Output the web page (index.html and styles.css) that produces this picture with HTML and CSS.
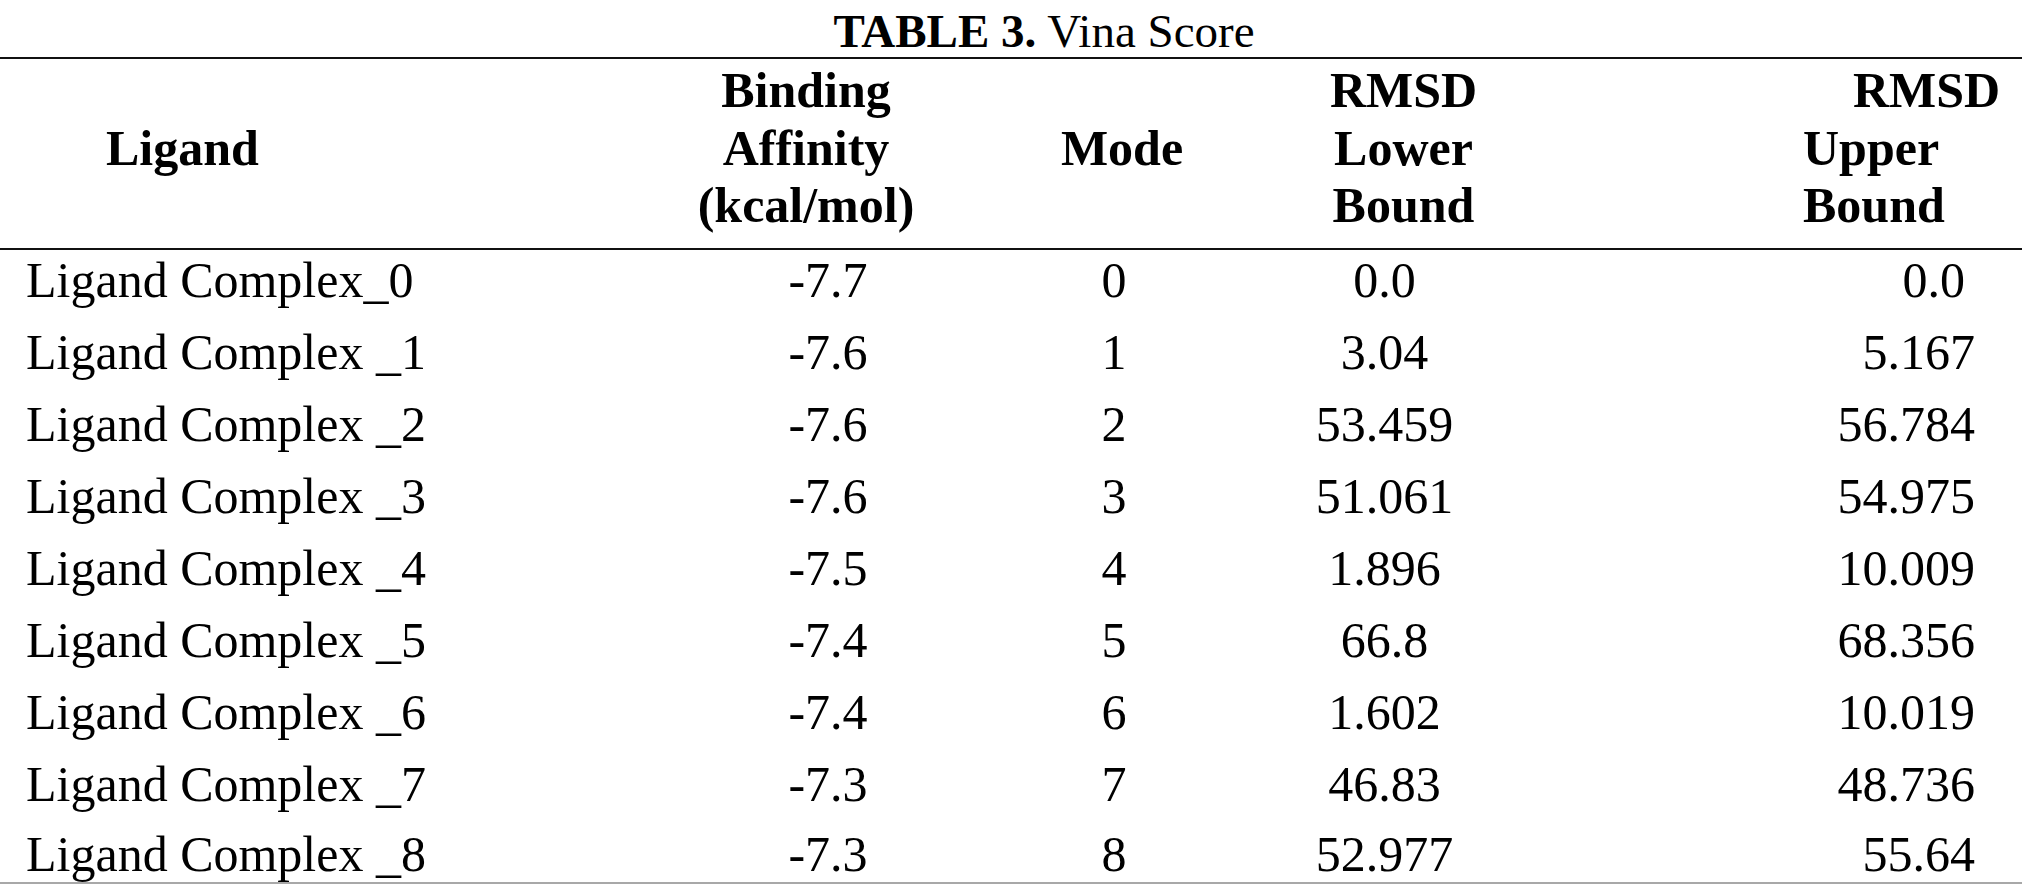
FILE: index.html
```html
<!DOCTYPE html>
<html lang="en">
<head>
<meta charset="utf-8">
<title>TABLE 3. Vina Score</title>
<link rel="stylesheet" href="styles.css">
</head>
<body>
<div class="page">
  <div class="caption"><b>TABLE 3.</b> Vina Score</div>
  <div class="table">
    <div class="head">
      <div class="hc c1"><span class="l">Ligand</span></div>
      <div class="hc c2"><span class="l">Binding</span><span class="l">Affinity</span><span class="l">(kcal/mol)</span></div>
      <div class="hc c3"><span class="l">Mode</span></div>
      <div class="hc c4"><span class="l">RMSD</span><span class="l">Lower</span><span class="l">Bound</span></div>
      <div class="hc c5"><span class="l ind">RMSD</span><span class="l">Upper</span><span class="l">Bound</span></div>
    </div>
    <div class="body">
      <div class="row"><div class="c1">Ligand Complex_0</div><div class="c2">-7.7</div><div class="c3">0</div><div class="c4">0.0</div><div class="c5 inset">0.0</div></div>
      <div class="row"><div class="c1">Ligand Complex _1</div><div class="c2">-7.6</div><div class="c3">1</div><div class="c4">3.04</div><div class="c5">5.167</div></div>
      <div class="row"><div class="c1">Ligand Complex _2</div><div class="c2">-7.6</div><div class="c3">2</div><div class="c4">53.459</div><div class="c5">56.784</div></div>
      <div class="row"><div class="c1">Ligand Complex _3</div><div class="c2">-7.6</div><div class="c3">3</div><div class="c4">51.061</div><div class="c5">54.975</div></div>
      <div class="row"><div class="c1">Ligand Complex _4</div><div class="c2">-7.5</div><div class="c3">4</div><div class="c4">1.896</div><div class="c5">10.009</div></div>
      <div class="row"><div class="c1">Ligand Complex _5</div><div class="c2">-7.4</div><div class="c3">5</div><div class="c4">66.8</div><div class="c5">68.356</div></div>
      <div class="row"><div class="c1">Ligand Complex _6</div><div class="c2">-7.4</div><div class="c3">6</div><div class="c4">1.602</div><div class="c5">10.019</div></div>
      <div class="row"><div class="c1">Ligand Complex _7</div><div class="c2">-7.3</div><div class="c3">7</div><div class="c4">46.83</div><div class="c5">48.736</div></div>
      <div class="row last"><div class="c1">Ligand Complex _8</div><div class="c2">-7.3</div><div class="c3">8</div><div class="c4">52.977</div><div class="c5">55.64</div></div>
    </div>
  </div>
</div>
</body>
</html>
```
FILE: styles.css
```css
* { box-sizing: border-box; }
html, body { margin: 0; padding: 0; background: #fff; }
body {
  font-family: "Liberation Serif", "Times New Roman", serif;
  color: #000;
  width: 2022px;
  height: 884px;
  overflow: hidden;
}
.page { display: flex; flex-direction: column; }
.caption {
  font-size: 47px;
  line-height: 52px;
  padding-top: 5px;
  padding-left: 66px;
  text-align: center;
}
.caption b { font-weight: bold; }
.table { display: flex; flex-direction: column; }
.head, .row {
  display: grid;
  grid-template-columns: 612px 388px 244px 316px 462px;
}
.head {
  border-top: 2px solid #111;
  border-bottom: 2px solid #111;
  font-weight: bold;
  font-size: 50px;
  line-height: 57.5px;
  padding: 3px 0 13px;
}
.hc {
  display: flex;
  flex-direction: column;
  justify-content: center;
}
.hc .l { display: block; white-space: nowrap; }
.head .c1 { padding-left: 106px; }
.head .c2, .head .c3, .head .c4 { align-items: center; }
.head .c4 { padding-left: 3px; }
.head .c5 { padding-left: 243px; }
.head .c5 .ind { padding-left: 50px; }
.row {
  font-size: 50px;
  line-height: 60px;
  padding-bottom: 12px;
  white-space: nowrap;
}
.row.last {
  line-height: 56px;
  padding-bottom: 0;
  border-bottom: 2px solid #a8a8a8;
}
.row .c1 { padding-left: 26px; }
.row .c2 { text-align: center; padding-left: 44px; }
.row .c3 { text-align: center; padding-right: 16px; }
.row .c4 { text-align: center; padding-right: 35px; }
.row .c5 { text-align: right; padding-right: 47px; }
.row .c5.inset { padding-right: 57px; }
```
